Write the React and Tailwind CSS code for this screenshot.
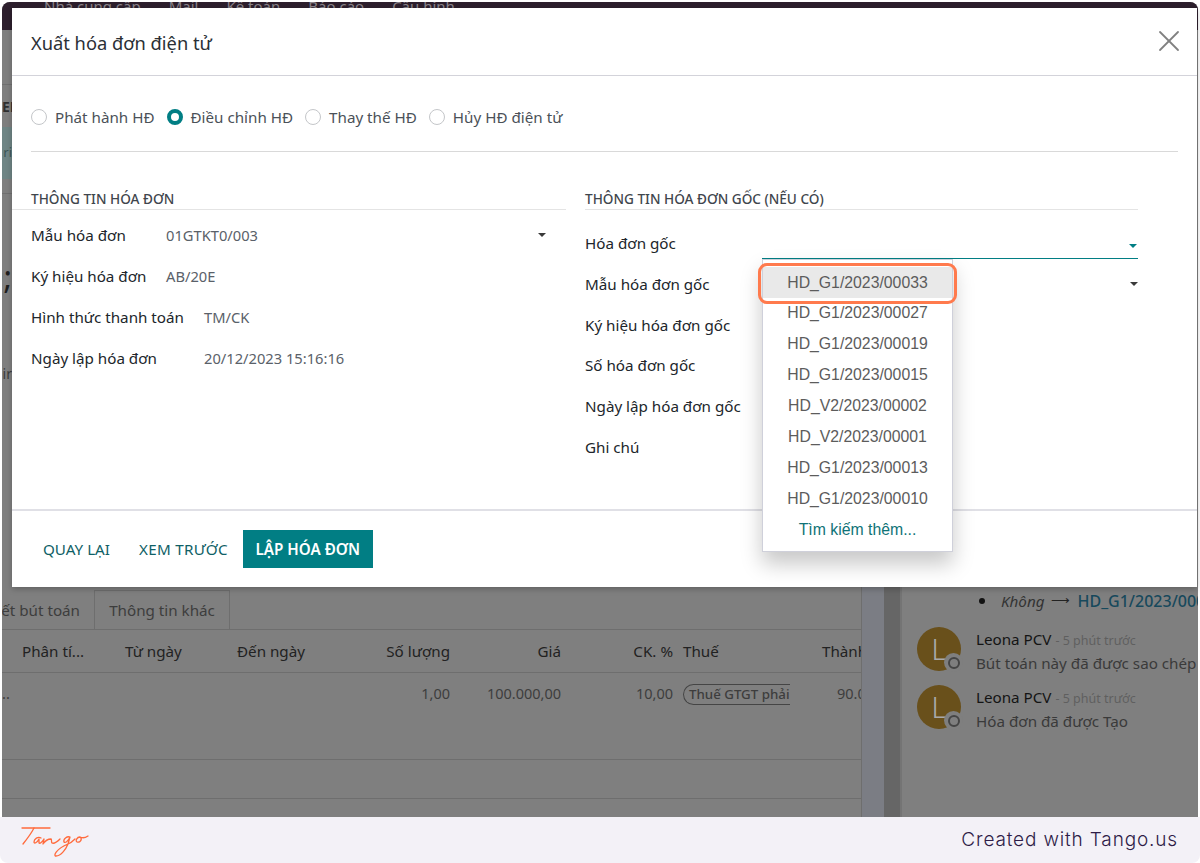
import React from 'react';
import { X } from 'lucide-react';

const noto = 'font-["Noto_Sans",sans-serif]';

const leftRows = [
    { label: 'Mẫu hóa đơn', value: '01GTKT0/003', width: 'w-[135px]', caret: true },
    { label: 'Ký hiệu hóa đơn', value: 'AB/20E', width: 'w-[135px]' },
    { label: 'Hình thức thanh toán', value: 'TM/CK', width: 'w-[173px]' },
    { label: 'Ngày lập hóa đơn', value: '20/12/2023 15:16:16', width: 'w-[173px]' },
];

const rightRows = ['Hóa đơn gốc', 'Mẫu hóa đơn gốc', 'Ký hiệu hóa đơn gốc', 'Số hóa đơn gốc', 'Ngày lập hóa đơn gốc', 'Ghi chú'];

const invoices = [
    'HD_G1/2023/00033',
    'HD_G1/2023/00027',
    'HD_G1/2023/00019',
    'HD_G1/2023/00015',
    'HD_V2/2023/00002',
    'HD_V2/2023/00001',
    'HD_G1/2023/00013',
    'HD_G1/2023/00010',
];

const Caret = ({ className }) => (
    <span className={`w-0 h-0 border-x-[4px] border-x-transparent border-t-[4px] ${className}`}></span>
);

const Radio = ({ label, checked }) => (
    <label className="flex items-center">
        {checked ? (
            <span className="w-[16px] h-[16px] rounded-full border-[4px] border-[#017e84] bg-white"></span>
        ) : (
            <span className="w-[16px] h-[16px] rounded-full border border-[#c4c6c9] bg-white"></span>
        )}
        <span className="ml-[8px] text-[15.2px] text-[#4b5158]">{label}</span>
    </label>
);

const Comment = ({ text }) => (
    <div className="flex h-[58px]">
        <div className="relative shrink-0 w-[44px] h-[44px] rounded-full bg-[#69501b] flex items-center justify-center text-[#a9a9a9] text-[30px] font-light leading-none">
            L
            <span className="absolute right-[-2px] bottom-[-1px] w-[19px] h-[19px] rounded-full bg-[#7f7f7f] flex items-center justify-center">
                <span className="w-[12px] h-[12px] rounded-full border-2 border-[#454545]"></span>
            </span>
        </div>
        <div className="ml-[15px] whitespace-nowrap">
            <div className="h-[24px] text-[15.2px] leading-[24px] text-[#141414]">
                Leona PCV <span className="text-[12.5px] text-[#5f5f5f]">- 5 phút trước</span>
            </div>
            <div className="text-[15.2px] leading-[24px] text-[#3a3a3a]">{text}</div>
        </div>
    </div>
);

// what sits dimmed behind the dialog
const Backdrop = () => (
    <div className={`absolute left-[2px] top-[2px] w-[1196px] h-[815px] bg-[#7f7f7f] rounded-t-[8px] overflow-hidden flex flex-col ${noto}`}>
        <div className="h-[28px] shrink-0 bg-[#2d1f2d] flex items-start pl-[42px] gap-[28px] text-[15px] leading-[8px] text-[#8a848a] overflow-hidden">
            <span>Nhà cung cấp</span>
            <span>Mail</span>
            <span>Kế toán</span>
            <span>Báo cáo</span>
            <span>Cấu hình</span>
        </div>
        <div className="flex flex-1 min-h-0">
            <div className="w-[859px] shrink-0 flex flex-col text-[#3c3c3c]">
                <div className="h-[55px] border-b border-[#707070]"></div>
                <div className="h-[42px] w-[10px] overflow-hidden flex justify-start items-center text-[14px] font-bold text-[#2f2f2f] whitespace-nowrap">EN</div>
                <div className="h-[52px] w-[10px] bg-[#6f8585] overflow-hidden flex justify-end items-center text-[13px] text-[#3c5555]">ri</div>
                <div className="h-[15px] border-b border-[#707070]"></div>
                <div className="h-[103px] w-[10px] overflow-hidden flex justify-end items-end text-[32px] leading-[40px] text-[#1f1f1f] whitespace-nowrap">0;</div>
                <div className="h-[87px] w-[10px] overflow-hidden flex justify-end items-end text-[14px] leading-[20px] whitespace-nowrap">ir</div>
                <div className="h-[206px]"></div>
                <div className="h-[40px] flex border-b border-[#6e6e6e] text-[15.2px] text-[#3d3d3d]">
                    <div className="w-[93px] h-[40px] border-r border-[#6e6e6e] overflow-hidden flex justify-end items-center pr-[14px] whitespace-nowrap">Chi tiết bút toán</div>
                    <div className="w-[135px] h-[40px] border-r border-t border-[#6e6e6e] flex items-center justify-center whitespace-nowrap">Thông tin khác</div>
                </div>
                <div className="h-[43px] shrink-0 grid grid-cols-[123px_112px_100px_113px_111px_112px_149px_1fr] items-center border-b border-[#6e6e6e] text-[15.2px] text-[#222] whitespace-nowrap overflow-hidden">
                    <span className="pl-[20px]">Phân tí...</span>
                    <span>Từ ngày</span>
                    <span>Đến ngày</span>
                    <span className="text-right">Số lượng</span>
                    <span className="text-right">Giá</span>
                    <span className="text-right">CK. %</span>
                    <span className="pl-[10px]">Thuế</span>
                    <span>Thành</span>
                </div>
                <div className="h-[87px] shrink-0 border-b border-[#6e6e6e] pt-[9px] text-[14.5px] text-[#3d3d3d]">
                    <div className="grid grid-cols-[123px_112px_100px_113px_111px_112px_149px_1fr] items-center h-[24px] whitespace-nowrap overflow-hidden">
                        <span>..</span>
                        <span></span>
                        <span></span>
                        <span className="text-right">1,00</span>
                        <span className="text-right">100.000,00</span>
                        <span className="text-right">10,00</span>
                        <span className="pl-[10px]">
                            <span className="block w-[107px] h-[21px] border border-r-0 border-[#454545] rounded-l-full pl-[5px] text-[13.3px] leading-[18px] font-medium overflow-hidden">Thuế GTGT phải trả</span>
                        </span>
                        <span className="pl-[15px]">90.000</span>
                    </div>
                </div>
                <div className="h-[39px] shrink-0 border-b border-[#6e6e6e]"></div>
            </div>
            <div className="w-[23px] shrink-0 bg-[#7b7d84] border-l border-[#6e6e6e]"></div>
            <div className="w-[16px] shrink-0 bg-[#666666]"></div>
            <div className="flex-1 min-w-0 border-l-2 border-[#747474] pl-[15px] pt-[559px] overflow-hidden">
                <div className="flex items-center h-[24px] pl-[62px] text-[15.2px] whitespace-nowrap">
                    <span className="w-[6px] h-[6px] rounded-full bg-[#111] mr-[16px] shrink-0"></span>
                    <span className="italic text-[#333]">Không</span>
                    <span className="mx-[7px] text-[#222] text-[13px]">⟶</span>
                    <span className="text-[16px] font-medium text-[#17495c]">HD_G1/2023/00033</span>
                </div>
                <div className="mt-[14px]">
                    <Comment text="Bút toán này đã được sao chép từ" />
                    <Comment text="Hóa đơn đã được Tạo" />
                </div>
            </div>
        </div>
    </div>
);

const Dialog = () => (
    <div className={`absolute left-[12px] top-[8px] w-[1185px] h-[579px] bg-white flex flex-col shadow-[0_2px_6px_rgba(0,0,0,0.25)] ${noto}`}>
        <div className="h-[68px] shrink-0 flex items-center justify-between pl-[19px] pr-[10px] border-b border-[#d3d3da]">
            <h4 className="mt-[3px] text-[18.3px] text-[#2b3036]">Xuất hóa đơn điện tử</h4>
            <X size={36} strokeWidth={1.2} className="mb-[2px] text-[#808080]" />
        </div>
        <div className="flex-1 min-h-0">
            <div className="mx-[19px] h-[76px] flex items-center gap-[12px] border-b border-[#d9d9d9] pt-[7px]">
                <Radio label="Phát hành HĐ" />
                <Radio label="Điều chỉnh HĐ" checked />
                <Radio label="Thay thế HĐ" />
                <Radio label="Hủy HĐ điện tử" />
            </div>
            <div className="flex mt-[38px]">
                <section className="w-[554px] shrink-0">
                    <h5 className="pl-[19px] h-[20px] border-b border-[#e4e4e4] text-[13.6px] leading-[17px] font-medium text-[#3f464d]">THÔNG TIN HÓA ĐƠN</h5>
                    <div className="pl-[19px] pt-[5px]">
                        {leftRows.map(row => (
                            <div key={row.label} className="h-[41px] flex items-center">
                                <span className={`${row.width} shrink-0 text-[15.2px] text-[#21262b] whitespace-nowrap pb-[1px]`}>{row.label}</span>
                                <span className="text-[14.7px] text-[#5a6169]">{row.value}</span>
                                {row.caret && <Caret className="ml-auto mr-[20px] mb-[2px] border-t-[#3a3a3a]" />}
                            </div>
                        ))}
                    </div>
                </section>
                <section className="ml-[19px] w-[553px] shrink-0">
                    <h5 className="h-[20px] border-b border-[#e4e4e4] text-[13.6px] leading-[17px] font-medium text-[#3f464d]">THÔNG TIN HÓA ĐƠN GỐC (NẾU CÓ)</h5>
                    <div className="pt-[13px]">
                        {rightRows.map((label, i) => (
                            <div key={label} className="h-[40.8px] flex items-center relative">
                                <span className="w-[177px] shrink-0 text-[15.2px] text-[#21262b] whitespace-nowrap">{label}</span>
                                {i === 0 && (
                                    <div className="flex-1 h-[26px] mt-[5px] border-b border-[#017e84] flex items-center justify-end pr-[1px]">
                                        <Caret className="mt-[1px] border-t-[#017e84]" />
                                    </div>
                                )}
                                {i === 1 && (
                                    <div className="flex-1 flex justify-end">
                                        <Caret className="border-t-[#3a3a3a]" />
                                    </div>
                                )}
                            </div>
                        ))}
                    </div>
                </section>
            </div>
        </div>
        <div className="h-[78px] shrink-0 border-t-2 border-[#e0e0e6] flex items-start pt-[19px] pl-[19px] text-[15.2px]">
            <button className="h-[38px] px-[12px] text-[#0f5f66]">QUAY LẠI</button>
            <button className="h-[38px] ml-[5px] px-[12px] tracking-[0.3px] text-[#0f5f66]">XEM TRƯỚC</button>
            <button className="h-[38px] w-[130px] ml-[3px] bg-[#017e84] font-semibold text-white">LẬP HÓA ĐƠN</button>
        </div>
    </div>
);

const InvoiceDropdown = () => (
    <div className="absolute left-[762px] top-[259px] w-[191px] h-[293px] bg-white border border-[#cfd0da] shadow-[0_12px_20px_rgba(0,0,0,0.22)] font-['Liberation_Sans',sans-serif] text-[15.8px] text-[#5c5c5c] pt-[7px]">
        {invoices.map((item, i) => (
            <div key={item} className={`h-[30.9px] flex items-center justify-center ${i === 0 ? 'bg-[#e9e9e9]' : ''}`}>
                {item}
            </div>
        ))}
        <div className="h-[30.9px] flex items-center justify-center text-[#0f7377]">Tìm kiếm thêm...</div>
    </div>
);

const TangoLogo = () => (
    <svg className="mt-[6px]" width="70" height="32" viewBox="0 0 70 32" fill="none" stroke="#ff6b3d" strokeWidth="1.3" strokeLinecap="round" strokeLinejoin="round">
        <path d="M2 1h28" />
        <path d="M14 1C11 7 7 12 3 17" />
        <path d="M21 11c-3-2-7 1-7 4 0 2 3 1 5-3l0 4c1 1 3-1 5-4l-1 5c2-3 5-5 8-5 1 0 0 3 1 4 2 1 5-1 8-4" />
        <path d="M50 10c-3-1-7 2-6 5 1 1 4 0 6-5l-2 7c-2 5-7 12-12 12-3 0 0-7 12-12 3-1 5-3 7-5" />
        <path d="M60 10c-3 0-5 4-3 5 3 1 6-3 3-5 2 1 5 1 8-1" />
    </svg>
);

const App = () => {
    return (
        <div className="relative w-[1200px] h-[863px] bg-white overflow-hidden">
            <Backdrop />
            <footer className="absolute left-0 bottom-0 w-[1200px] h-[46px] bg-[#f3f1f7] rounded-b-[8px] flex items-center justify-between pl-[20px] pr-[22px]">
                <TangoLogo />
                <span className="font-['Inter',sans-serif] font-light text-[19px] tracking-[0.85px] text-[#2e1c47]">Created with Tango.us</span>
            </footer>
            <Dialog />
            <InvoiceDropdown />
            {/* orange marker round the first result */}
            <div className="absolute left-[758px] top-[263px] w-[199px] h-[41px] rounded-[9px] border-[3px] border-[#ff7a4d]"></div>
        </div>
    );
};

export default App;
